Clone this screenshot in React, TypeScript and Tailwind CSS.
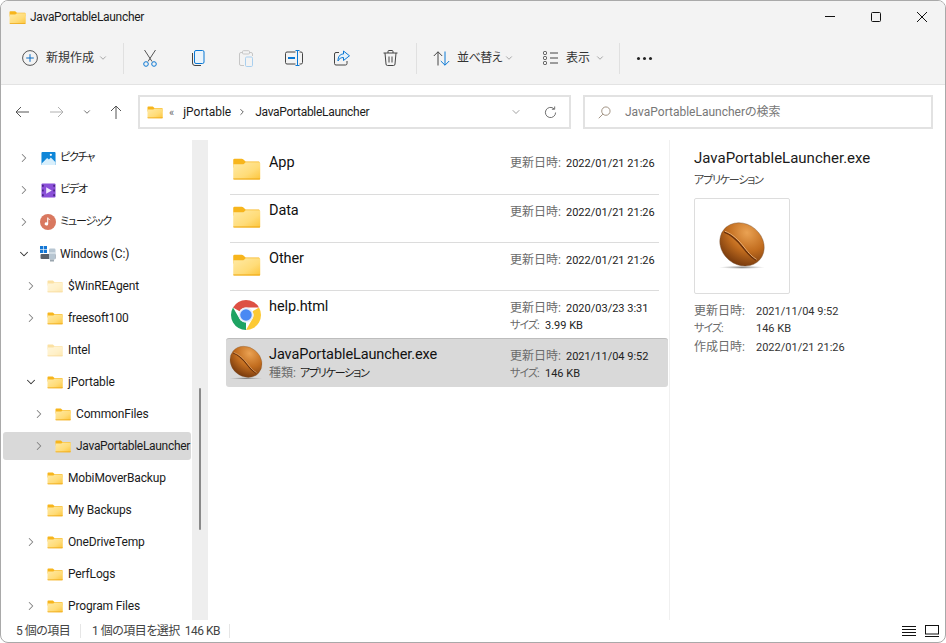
import { ChevronDown, ChevronRight } from "lucide-react";

const FONT = "font-['Roboto','Noto_Sans_CJK_JP',sans-serif] [font-feature-settings:'palt']";

const FolderIcon = ({ className = "", faded = false }: { className?: string; faded?: boolean }) => (
  <svg viewBox="0 0 32 26" className={`${className} ${faded ? "opacity-40" : ""}`}>
    <defs>
      <linearGradient id="folderBody" x1="0" y1="0" x2="1" y2="1">
        <stop offset="0" stopColor="#ffeaa6" />
        <stop offset="0.6" stopColor="#ffdc78" />
        <stop offset="1" stopColor="#fcc53c" />
      </linearGradient>
    </defs>
    <path d="M1 3.5A1.5 1.5 0 0 1 2.5 2h8.2c.6 0 1 .2 1.5.6L15 5h15a1.5 1.5 0 0 1 1 1.5V12H1z" fill="#f7b51c" />
    <path d="M1 8.2h10.5c.8 0 1.2-.2 1.8-.7L15 6h15.5A1 1 0 0 1 31.5 7v17a1.5 1.5 0 0 1-1.5 1.5H2.5A1.5 1.5 0 0 1 1 24z" fill="url(#folderBody)" />
    <path d="M1 24.2h30.5v.3a1.2 1.2 0 0 1-1.2 1H2.2a1.2 1.2 0 0 1-1.2-1z" fill="#eda50e" />
  </svg>
);

const BeanIcon = ({ className = "" }: { className?: string }) => (
  <svg viewBox="0 0 48 48" className={className}>
    <defs>
      <radialGradient id="bean" cx="0.42" cy="0.2" r="0.85">
        <stop offset="0" stopColor="#eaa253" />
        <stop offset="0.5" stopColor="#c26d1f" />
        <stop offset="1" stopColor="#6f340b" />
      </radialGradient>
      <radialGradient id="beanShadow">
        <stop offset="0" stopColor="#555" stopOpacity="0.7" />
        <stop offset="1" stopColor="#777" stopOpacity="0" />
      </radialGradient>
    </defs>
    <ellipse cx="24" cy="44.5" rx="22" ry="1.6" fill="url(#beanShadow)" />
    <ellipse cx="24" cy="22.5" rx="22.5" ry="19.5" transform="rotate(40 24 22.5)" fill="url(#bean)" stroke="#7d5a3c" strokeWidth="0.4" />
    <path d="M7 10.500C14 13 20 19 25 25.500S33 35 37.500 37.500" fill="none" stroke="#6a3008" strokeWidth="1.5" />
    <path d="M7.500 9.800C15 12.500 21 18.500 26 25S34 34.500 38 36.800" fill="none" stroke="#f2bd85" strokeWidth="0.8" />
  </svg>
);

const ChromeIcon = ({ className = "" }: { className?: string }) => {
  const blade = "M6.68 14A20 20 0 0 1 41.32 14H24A10 10 0 0 0 15.34 19Z";
  return (
    <svg viewBox="0 0 48 48" className={className}>
      <circle cx="24" cy="24" r="20" fill="#fff" />
      <path d={blade} fill="#dd5144" />
      <path d={blade} fill="#fcc934" transform="rotate(120 24 24)" />
      <path d={blade} fill="#1ea362" transform="rotate(240 24 24)" />
      <circle cx="24" cy="24" r="10" fill="#e8eef8" />
      <circle cx="24" cy="24" r="7.7" fill="#4a89f3" />
    </svg>
  );
};

const PictureIcon = () => (
  <svg viewBox="0 0 16 16" className="h-[15px] w-[15px]">
    <rect x="0.5" y="1" width="15" height="14" rx="1" fill="#0f86d8" />
    <path d="M.5 13.5 6.5 7.5l2 1.5 2-2 5 5v2a1 1 0 0 1-1 1h-13a1 1 0 0 1-1-1z" fill="#d8effc" />
    <circle cx="10.5" cy="4" r="1.2" fill="#fff" />
  </svg>
);

const VideoIcon = () => (
  <svg viewBox="0 0 16 16" className="h-[15px] w-[15px]">
    <rect x="0.5" y="0.5" width="15" height="15" rx="1.2" fill="#8a4fd8" />
    <rect x="1.2" y="2" width="1.6" height="2" fill="#3d1f73" />
    <rect x="1.2" y="7" width="1.6" height="2" fill="#3d1f73" />
    <rect x="1.2" y="12" width="1.6" height="2" fill="#3d1f73" />
    <rect x="13.2" y="2" width="1.6" height="2" fill="#3d1f73" />
    <rect x="13.2" y="7" width="1.6" height="2" fill="#3d1f73" />
    <rect x="13.2" y="12" width="1.6" height="2" fill="#3d1f73" />
    <path d="M5.5 4.5 11.5 8l-6 3.5z" fill="#f0e6ff" />
  </svg>
);

const MusicIcon = () => (
  <svg viewBox="0 0 16 16" className="h-4 w-4">
    <circle cx="8" cy="8" r="8" fill="#d9785f" />
    <path d="M8.2 3.5v6.4a1.8 1.5 0 1 1-1-1.3V3.5z" fill="#fff" />
    <path d="M8.2 3.5c.4 1.5 2 1.5 2.2 3-.6-.8-1.4-1-2.2-1z" fill="#fff" />
  </svg>
);

const DriveIcon = () => (
  <svg viewBox="0 0 16 16" className="h-4 w-4">
    <rect x="0" y="0" width="3.2" height="3.2" fill="#1577d4" />
    <rect x="3.8" y="0" width="3.2" height="3.2" fill="#1577d4" />
    <rect x="0" y="3.8" width="3.2" height="3.2" fill="#1577d4" />
    <rect x="3.8" y="3.8" width="3.2" height="3.2" fill="#1577d4" />
    <rect x="0.5" y="8" width="15" height="5" rx="1" fill="#5a6068" />
    <rect x="9" y="2.5" width="6.5" height="11" rx="1.2" fill="#b7c6d2" />
    <rect x="10" y="13.5" width="4" height="2" fill="#9aa5ae" />
    <rect x="9" y="6.5" width="6.5" height="1" fill="#eef3f7" />
  </svg>
);

const ToolButton = ({ children }: { children: React.ReactNode }) => (
  <div className="flex h-full w-12 items-center justify-center">{children}</div>
);

const Divider = () => <div className="h-[31px] w-px bg-[#e0e0e0]" />;

// kana labels run tighter than the latin ones
const KANA = "ml-[4px] text-[11px] tracking-[-1.2px]";

const navRows = [
  { label: "ピクチャ", pad: "pl-[13px]", arrow: "right", icon: <PictureIcon />, text: KANA },
  { label: "ビデオ", pad: "pl-[13px]", arrow: "right", icon: <VideoIcon />, text: KANA },
  { label: "ミュージック", pad: "pl-[13px]", arrow: "right", icon: <MusicIcon />, text: KANA },
  { label: "Windows (C:)", pad: "pl-[13px]", arrow: "down", icon: <DriveIcon />, text: "ml-[4px] tracking-[-0.15px]" },
  { label: "$WinREAgent", pad: "pl-[20px]", arrow: "right", faded: true },
  { label: "freesoft100", pad: "pl-[20px]", arrow: "right" },
  { label: "Intel", pad: "pl-[20px]", faded: true },
  { label: "jPortable", pad: "pl-[20px]", arrow: "down" },
  { label: "CommonFiles", pad: "pl-[28px]", arrow: "right" },
  { label: "JavaPortableLauncher", pad: "pl-[28px]", arrow: "right", selected: true, text: "ml-[5px] tracking-[-0.3px]" },
  { label: "MobiMoverBackup", pad: "pl-[20px]" },
  { label: "My Backups", pad: "pl-[20px]" },
  { label: "OneDriveTemp", pad: "pl-[20px]", arrow: "right" },
  { label: "PerfLogs", pad: "pl-[20px]" },
  { label: "Program Files", pad: "pl-[20px]", arrow: "right" },
];

type FileRow = {
  name: string;
  icon: "folder" | "chrome" | "bean";
  date: string;
  size?: string;
  kind?: string;
};

const files: FileRow[] = [
  { name: "App", icon: "folder", date: "2022/01/21 21:26" },
  { name: "Data", icon: "folder", date: "2022/01/21 21:26" },
  { name: "Other", icon: "folder", date: "2022/01/21 21:26" },
  { name: "help.html", icon: "chrome", date: "2020/03/23 3:31", size: "3.99 KB" },
  { name: "JavaPortableLauncher.exe", icon: "bean", date: "2021/11/04 9:52", size: "146 KB", kind: "アプリケーション" },
];

export default function App() {
  return (
    <div className={`${FONT} h-[643px] w-[946px] overflow-hidden bg-white`}>
      <div className="flex h-full w-full flex-col overflow-hidden rounded-t-lg rounded-b-lg border border-[#a9a9a9] bg-white text-[#1b1b1b]">
        {/* title bar */}
        <div className="flex h-[31px] shrink-0 items-center bg-[#f3f3f3] pl-[8px]">
          <FolderIcon className="h-[14px] w-[17px]" />
          <span className="ml-[4px] text-[12px] tracking-[-0.3px]">JavaPortableLauncher</span>
          <div className="ml-auto flex items-center">
            <div className="flex w-[46px] justify-center">
              <div className="h-px w-[10px] bg-[#111]" />
            </div>
            <div className="flex w-[46px] justify-center">
              <div className="h-[10px] w-[10px] rounded-[1.5px] border border-[#111]" />
            </div>
            <div className="flex w-[46px] justify-center">
              <svg viewBox="0 0 10 10" className="h-[10px] w-[10px]" stroke="#111" strokeWidth="1">
                <path d="M0 0l10 10M10 0 0 10" />
              </svg>
            </div>
          </div>
        </div>

        {/* command bar */}
        <div className="flex h-[53px] shrink-0 items-center border-b border-[#e3e3e3] bg-[#f3f3f3]">
          <div className="flex h-full w-[122px] items-center pl-[21px]">
            <svg viewBox="0 0 16 16" className="h-[16px] w-[16px]" fill="none">
              <circle cx="8" cy="8" r="7.4" stroke="#444" strokeWidth="0.9" />
              <path d="M8 4.2v7.6M4.2 8h7.6" stroke="#0a6cc4" strokeWidth="1" />
            </svg>
            <span className="ml-[8px] text-[12px] text-[#333]">新規作成</span>
            <ChevronDown className="ml-[4px] h-[10px] w-[10px] text-[#777]" strokeWidth={1.5} />
          </div>
          <Divider />
          <div className="ml-[2px] flex h-full">
            <ToolButton>
              <svg viewBox="0 0 16 18" className="h-[18px] w-[16px]" fill="none" strokeWidth="1">
                <path d="M2.5 1 10 12.5M13.5 1 6 12.5" stroke="#555" />
                <circle cx="4" cy="15" r="2.3" stroke="#0a78d4" />
                <circle cx="12" cy="15" r="2.3" stroke="#0a78d4" />
              </svg>
            </ToolButton>
            <ToolButton>
              <svg viewBox="0 0 14 16" className="h-[16px] w-[14px]" fill="none" strokeWidth="1">
                <path d="M1.5 3v10a2.5 2.5 0 0 0 2.5 2.5h6" stroke="#444" />
                <rect x="3.5" y="0.5" width="9.5" height="13" rx="1.5" fill="#eaf4fc" stroke="#0a78d4" />
              </svg>
            </ToolButton>
            <ToolButton>
              <svg viewBox="0 0 14 17" className="h-[17px] w-[14px]" fill="none" strokeWidth="1">
                <path d="M3.5 2.5H2A1.5 1.5 0 0 0 .5 4v10A1.5 1.5 0 0 0 2 15.500h3M10.500 2.500H12A1.500 1.500 0 0 1 13.500 4v2" stroke="#c6c6c6" />
                <rect x="3.500" y="0.700" width="7" height="3.300" rx="1" stroke="#c6c6c6" />
                <rect x="6.500" y="7" width="7" height="9.500" rx="1.200" stroke="#a9cfee" />
              </svg>
            </ToolButton>
            <ToolButton>
              <svg viewBox="0 0 18 16" className="h-[16px] w-[18px]" fill="none" strokeWidth="1">
                <path d="M10.500 2H2A1.500 1.500 0 0 0 .5 3.500v9A1.500 1.500 0 0 0 2 14h8.500M14.500 2H16a1.500 1.500 0 0 1 1.500 1.500v9A1.500 1.500 0 0 1 16 14h-1.500" stroke="#444" />
                <path d="M12.500 0.500v15M10.500 0.500h4M10.500 15.500h4" stroke="#0a78d4" />
                <rect x="3" y="7" width="7" height="2" fill="#0a78d4" />
              </svg>
            </ToolButton>
            <ToolButton>
              <svg viewBox="0 0 16 16" className="h-[16px] w-[16px]" fill="none" strokeWidth="1">
                <path d="M5 2.500H2A1.500 1.500 0 0 0 .5 4v9.500A1.500 1.500 0 0 0 2 15h9.500A1.500 1.500 0 0 0 13 13.500V11" stroke="#444" />
                <path d="M9.500 1v3C6 4 4 6.500 4 11c1.200-2.500 3-3.500 5.500-3.500v3l6-4.700z" stroke="#0a78d4" fill="#e5f2fb" />
              </svg>
            </ToolButton>
            <ToolButton>
              <svg viewBox="0 0 15 16" className="h-[16px] w-[15px]" fill="none" stroke="#444" strokeWidth="1">
                <path d="M.5 3h14M5 3V1.500A1 1 0 0 1 6 .5h3a1 1 0 0 1 1 1V3M2 3l1 11a1.500 1.500 0 0 0 1.500 1.500h6A1.500 1.500 0 0 0 12 14l1-11M6 6.500v6M9 6.500v6" />
              </svg>
            </ToolButton>
          </div>
          <div className="ml-[2px]">
            <Divider />
          </div>
          <div className="flex h-full w-[113px] items-center pl-[16px]">
            <svg viewBox="0 0 17 15" className="h-[15px] w-[17px]" fill="none" strokeWidth="1">
              <path d="M5 14.500V.8M.8 5 5 .8 9.200 5" stroke="#444" />
              <path d="M12 .5v13.700M7.800 10 12 14.200 16.200 10" stroke="#0a78d4" />
            </svg>
            <span className="ml-[7px] w-[47px] text-[12px] tracking-[-0.5px] whitespace-nowrap text-[#333]">並べ替え</span>
            <ChevronDown className="h-[10px] w-[10px] text-[#777]" strokeWidth={1.5} />
          </div>
          <div className="flex h-full w-[89px] items-center pl-[13px]">
            <svg viewBox="0 0 15 14" className="h-[14px] w-[15px]" fill="none" stroke="#444" strokeWidth="1">
              <rect x="0.500" y="0.500" width="3" height="3" rx="1" />
              <rect x="0.500" y="5.500" width="3" height="3" rx="1" />
              <rect x="0.500" y="10.500" width="3" height="3" rx="1" />
              <path d="M7 2h8M7 7h8M7 12h8" />
            </svg>
            <span className="ml-[8px] text-[12px] text-[#333]">表示</span>
            <ChevronDown className="ml-[5px] h-[10px] w-[10px] text-[#777]" strokeWidth={1.5} />
          </div>
          <Divider />
          <div className="ml-[17px] flex gap-[3px]">
            <div className="h-[3px] w-[3px] rounded-full bg-[#222]" />
            <div className="h-[3px] w-[3px] rounded-full bg-[#222]" />
            <div className="h-[3px] w-[3px] rounded-full bg-[#222]" />
          </div>
        </div>

        {/* address row */}
        <div className="flex h-[55px] shrink-0 items-center pb-[1px]">
          <div className="flex w-[137px] items-center">
            <svg viewBox="0 0 14 12" className="ml-[14px] h-[12px] w-[14px]" fill="none" stroke="#555" strokeWidth="1">
              <path d="M14 6H1M6 1 1 6l5 5" />
            </svg>
            <svg viewBox="0 0 14 12" className="ml-[21px] h-[12px] w-[14px]" fill="none" stroke="#b0b0b0" strokeWidth="1">
              <path d="M0 6h13M8 1l5 5-5 5" />
            </svg>
            <ChevronDown className="ml-[18px] h-[10px] w-[10px] text-[#555]" strokeWidth={2} />
            <svg viewBox="0 0 12 14" className="ml-[18px] h-[14px] w-[12px]" fill="none" stroke="#555" strokeWidth="1">
              <path d="M6 14V1M1 6l5-5 5 5" />
            </svg>
          </div>
          <div className="flex h-[34px] w-[433px] items-center border-2 border-[#e2e2e2] bg-white pl-[7px]">
            <FolderIcon className="h-[14px] w-[16px]" />
            <span className="ml-[6px] text-[11px] leading-none text-[#666]">«</span>
            <span className="ml-[9px] w-[54px] text-[12px]">jPortable</span>
            <ChevronRight className="h-[10px] w-[10px] text-[#444]" strokeWidth={2} />
            <span className="ml-[8px] text-[12px] tracking-[-0.3px]">JavaPortableLauncher</span>
            <ChevronDown className="ml-auto h-3 w-3 text-[#666]" strokeWidth={1.25} />
            <svg viewBox="0 0 14 14" className="mr-[12px] ml-[22px] h-[13px] w-[13px]" fill="none" stroke="#666" strokeWidth="1">
              <path d="M12.500 7a5.500 5.500 0 1 1-1.700-4M11.500 .5v3h-3" />
            </svg>
          </div>
          <div className="ml-[12px] flex h-[34px] w-[350px] items-center border-2 border-[#e2e2e2] bg-white pl-[13px]">
            <svg viewBox="0 0 14 14" className="h-[13px] w-[13px]" fill="none" stroke="#9a8a7a" strokeWidth="1">
              <circle cx="8.500" cy="5.500" r="4.500" />
              <path d="M5.200 8.800 .8 13.200" />
            </svg>
            <span className="ml-[14px] text-[12px] text-[#777]">JavaPortableLauncherの検索</span>
          </div>
        </div>

        {/* main */}
        <div className="flex min-h-0 flex-1">
          <div className="w-[191px] shrink-0 overflow-hidden pt-[4px] pr-[1px] pl-[2px] text-[12px]">
            {navRows.map((row) => (
              <div
                key={row.label}
                className={`mb-1 flex h-7 items-center overflow-hidden rounded-[3px] whitespace-nowrap ${row.pad} ${row.selected ? "bg-[#d9d9d9]" : ""}`}
              >
                <div className="flex h-4 w-4 shrink-0 items-center justify-center">
                  {row.arrow === "right" && <ChevronRight className="h-[14px] w-[14px] text-[#808080]" strokeWidth={1.75} />}
                  {row.arrow === "down" && <ChevronDown className="h-[14px] w-[14px] text-[#333]" strokeWidth={1.75} />}
                </div>
                <div className="ml-2 flex w-4 shrink-0 justify-center">
                  {row.icon ?? <FolderIcon className="h-[14px] w-4" faded={row.faded} />}
                </div>
                <span className={row.text ?? "ml-[5px] tracking-[-0.15px]"}>{row.label}</span>
              </div>
            ))}
          </div>

          <div className="w-4 shrink-0 bg-[#eeeeee] pt-[248px] pl-[7px]">
            <div className="h-[142px] w-[2px] rounded-full bg-[#8a8a8a]" />
          </div>

          <div className="w-[461px] shrink-0 pt-[6px] pl-[18px]">
            <div className="w-[442px]">
              {files.map((file, i) => {
                const selected = i === 4;
                const ruled = i > 0 && i < 4;
                return (
                  <div
                    key={file.name}
                    className={`pr-[9px] pl-1 ${selected ? "h-[49px] rounded-[3px] border-t border-[#bdbdbd] bg-[#d9d9d9]" : "h-12"}`}
                  >
                    <div className={`flex h-12 ${ruled ? "border-t border-[#dcdcdc]" : ""}`}>
                      <div className="flex w-[39px] shrink-0 items-center pl-[2px]">
                        {file.icon === "folder" && <FolderIcon className="-mt-[4px] h-[23px] w-[29px]" />}
                        {file.icon === "chrome" && <ChromeIcon className="h-[36px] w-[36px] -translate-x-[4px]" />}
                        {file.icon === "bean" && <BeanIcon className="h-[36px] w-[36px] -translate-x-[4px]" />}
                      </div>
                      <div className={`w-[241px] shrink-0 ${ruled ? "pt-[5px]" : selected ? "pt-[5px]" : "pt-[6px]"}`}>
                        <div className="h-[21px] text-[14.5px] leading-[21px] tracking-[-0.1px] whitespace-nowrap text-[#111]">{file.name}</div>
                        {file.kind && (
                          <div className="flex items-baseline leading-[17px]">
                            <span className="text-[12px] text-[#6b6b6b]">種類:</span>
                            <span className="ml-[4px] text-[11px] tracking-[-1.2px]">{file.kind}</span>
                          </div>
                        )}
                      </div>
                      <div className="min-w-0 flex-1 pt-[8px] whitespace-nowrap">
                        <div className="flex h-[18px] items-baseline leading-[18px]">
                          <span className="w-[56px] shrink-0 text-[12px] text-[#6b6b6b]">更新日時:</span>
                          <span className="text-[11px] text-[#222]">{file.date}</span>
                        </div>
                        {file.size && (
                          <div className="flex h-[18px] items-baseline leading-[18px]">
                            <span className="w-[35px] shrink-0 text-[11px] tracking-[-1px] text-[#6b6b6b]">サイズ:</span>
                            <span className="text-[11px] text-[#222]">{file.size}</span>
                          </div>
                        )}
                      </div>
                    </div>
                  </div>
                );
              })}
            </div>
          </div>

          <div className="flex-1 border-l border-[#f0f0f0] pt-[8px] pl-[24px]">
            <div className="text-[15px] leading-[20px] whitespace-nowrap text-[#1a1a1a]">JavaPortableLauncher.exe</div>
            <div className="mt-[4px] text-[11px] leading-[18px] tracking-[-1.2px] text-[#444]">アプリケーション</div>
            <div className="mt-[8px] flex h-[96px] w-[96px] items-center justify-center rounded-[2px] border border-[#dddddd]">
              <BeanIcon className="h-[50px] w-[50px]" />
            </div>
            <div className="mt-[8px] grid auto-rows-[18px] grid-cols-[62px_1fr] items-baseline leading-[18px] whitespace-nowrap">
              <span className="text-[12px] text-[#6b6b6b]">更新日時:</span>
              <span className="text-[11px] text-[#333]">2021/11/04 9:52</span>
              <span className="text-[11px] tracking-[-1px] text-[#6b6b6b]">サイズ:</span>
              <span className="text-[11px] text-[#333]">146 KB</span>
              <span className="text-[12px] text-[#6b6b6b]">作成日時:</span>
              <span className="text-[11px] text-[#333]">2022/01/21 21:26</span>
            </div>
          </div>
        </div>

        {/* status bar */}
        <div className="flex h-[22px] shrink-0 items-center pl-[15px] text-[12px] tracking-[-0.5px] whitespace-nowrap text-[#444]">
          <span className="w-[64px]">5 個の項目</span>
          <div className="h-[14px] w-px bg-[#e6e6e6]" />
          <span className="ml-[11px] w-[137px]">1 個の項目を選択&nbsp;&nbsp;146 KB</span>
          <div className="h-[14px] w-px bg-[#e6e6e6]" />
          <div className="mr-[6px] ml-auto flex items-center gap-[9px]">
            <svg viewBox="0 0 14 11" className="h-[11px] w-[14px]" stroke="#111" strokeWidth="1">
              <path d="M0 .5h14M0 3.500h14M0 6.500h14M0 9.500h14" />
            </svg>
            <svg viewBox="0 0 14 12" className="h-[12px] w-[14px]" fill="none" stroke="#111" strokeWidth="1">
              <rect x="0.500" y="0.500" width="13" height="8.500" />
              <path d="M0 11.500h14" />
            </svg>
          </div>
        </div>
      </div>
    </div>
  );
}
